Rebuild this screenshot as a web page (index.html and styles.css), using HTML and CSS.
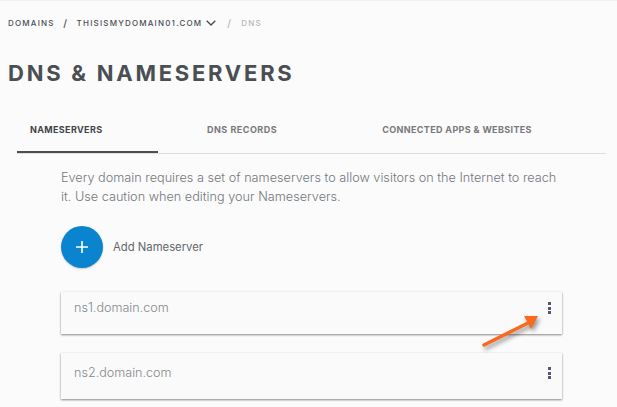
FILE: index.html
```html
<!DOCTYPE html>
<html lang="en">
<head>
  <meta charset="UTF-8">
  <title>DNS &amp; Nameservers</title>
  <link rel="stylesheet" href="styles.css">
</head>
<body>
  <div class="breadcrumb">
    <span>DOMAINS</span>
    <span class="slash">/</span>
    <span>THISISMYDOMAIN01.COM</span>
    <svg class="chevron" width="10" height="6" viewBox="0 0 10 6"><path d="M.7.7l4.3 4.3L9.3.7" fill="none" stroke="#4a4f54" stroke-width="1.4"/></svg>
    <span class="slash light">/</span>
    <span class="light">DNS</span>
  </div>

  <h1>DNS &amp; NAMESERVERS</h1>

  <div class="tabs">
    <div class="tab active">NAMESERVERS</div>
    <div class="tab records">DNS RECORDS</div>
    <div class="tab apps">CONNECTED APPS &amp; WEBSITES</div>
  </div>

  <div class="content">
    <p class="intro">Every domain requires a set of nameservers to allow visitors on the Internet to reach it. Use caution when editing your Nameservers.</p>

    <div class="add-row">
      <div class="add-button">
        <svg width="14" height="14" viewBox="0 0 14 14"><path d="M7 1v12M1 7h12" stroke="#fff" stroke-width="1.6"/></svg>
      </div>
      <span class="add-label">Add Nameserver</span>
    </div>

    <div class="card first">
      <span class="card-name">ns1.domain.com</span>
      <div class="dots"><i></i><i></i><i></i></div>
    </div>
    <div class="card second">
      <span class="card-name">ns2.domain.com</span>
      <div class="dots"><i></i><i></i><i></i></div>
    </div>
  </div>

  <!-- annotation arrow pasted over the screenshot -->
  <svg class="arrow" width="70" height="50" viewBox="0 0 70 50">
    <path class="arrow-main" d="M6 40L52 17" />
    <path class="arrow-head" d="M46 11L60 11L53 24Z" />
  </svg>
</body>
</html>
```
FILE: styles.css
```css
html, body {
  margin: 0;
  height: 407px;
  overflow: hidden;
}
body {
  position: relative;
  box-sizing: border-box;
  background-color: #fbfbfb;
  border-top: 1px solid #f1f1f1;
  font-family: Inter, "Open Sans", sans-serif;
  color: #4a4f54;
}
.breadcrumb {
  display: flex;
  align-items: center;
  height: 12px;
  margin: 16px 0 0 8px;
  font-size: 8px;
  font-weight: 500;
  letter-spacing: 1.2px;
}
.slash {
  margin: 0 8.5px;
  font-size: 10px;
}
.chevron {
  margin-left: 4px;
}
.chevron + .slash {
  margin: 0 9px 0 11px;
}
.light {
  color: #b5b7b9;
}
h1 {
  margin: 27px 0 0 8px;
  font-size: 22px;
  line-height: 34px;
  font-weight: 700;
  letter-spacing: 2.75px;
  color: #4a4f54;
}
.tabs {
  display: flex;
  height: 48px;
  margin: 15px 11px 0 17px;
  border-bottom: 1px solid #dedede;
}
.tab {
  box-sizing: border-box;
  height: 48px;
  padding-top: 19px;
  font-size: 9px;
  line-height: 12px;
  font-weight: 700;
  letter-spacing: 0.36px;
  color: #77797c;
}
.tab.active {
  width: 141px;
  padding-left: 13px;
  color: #3f4347;
  border-bottom: 2px solid #4a4f54;
}
.tab.records {
  margin-left: 49px;
  letter-spacing: 0.5px;
}
.tab.apps {
  margin-left: 105px;
}
.content {
  margin: 14px 55px 0 61px;
}
.intro {
  margin: 0;
  font-size: 12.7px;
  line-height: 19px;
  font-weight: 300;
  color: #74787c;
}
.add-row {
  display: flex;
  align-items: center;
  margin-top: 20px;
}
.add-button {
  display: flex;
  align-items: center;
  justify-content: center;
  width: 42px;
  height: 42px;
  border-radius: 50%;
  background-color: #0a84cf;
  box-shadow: 0 1px 2px rgba(0, 0, 0, 0.2);
}
.add-label {
  margin-left: 10px;
  font-size: 11.3px;
  color: #63676b;
}
.card {
  display: flex;
  justify-content: space-between;
  box-sizing: border-box;
  background-color: #fafafa;
  box-shadow: 0 1px 2px rgba(0, 0, 0, 0.45), 0 0 2px rgba(0, 0, 0, 0.06);
  padding: 7px 11px 0 13px;
}
.card.first {
  height: 42px;
  margin-top: 24px;
}
.card.second {
  height: 46px;
  margin-top: 19px;
  padding-top: 11px;
}
.card-name {
  font-size: 12.6px;
  line-height: 17px;
  font-weight: 300;
  color: #85898c;
}
.dots {
  display: flex;
  flex-direction: column;
  gap: 1.5px;
  padding-top: 3px;
}
.dots i {
  display: block;
  width: 3px;
  height: 3px;
  background-color: #5a5570;
}
.arrow {
  position: absolute;
  left: 478px;
  top: 304px;
  overflow: visible;
  filter: drop-shadow(2px 3px 2px rgba(0, 0, 0, 0.4));
}
.arrow-main {
  stroke: #f9691e;
  stroke-width: 3.5;
  stroke-linecap: round;
}
.arrow-head {
  fill: #f9691e;
}
```
